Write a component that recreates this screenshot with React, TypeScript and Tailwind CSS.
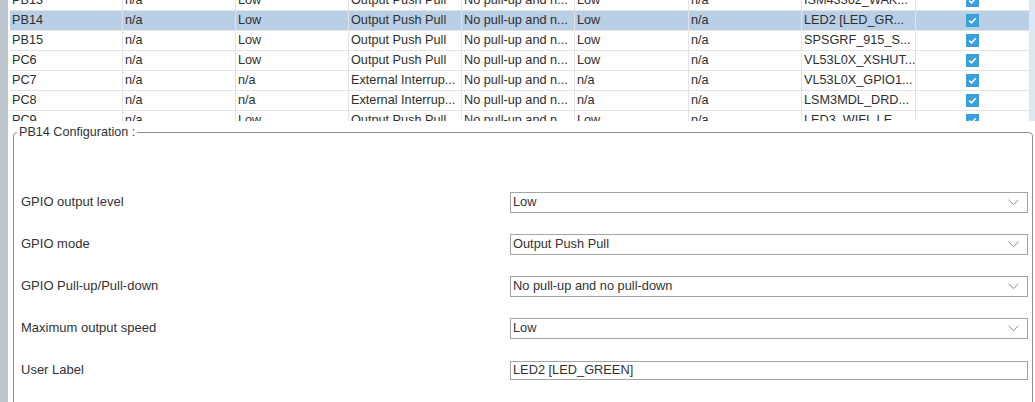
import React from "react";

type Row = { pin: string; c: string[]; sel?: boolean };

const rows: Row[] = [
  { pin: "PB13", c: ["n/a", "Low", "Output Push Pull", "No pull-up and n...", "Low", "n/a", "ISM43362_WAK..."] },
  { pin: "PB14", c: ["n/a", "Low", "Output Push Pull", "No pull-up and n...", "Low", "n/a", "LED2 [LED_GR..."], sel: true },
  { pin: "PB15", c: ["n/a", "Low", "Output Push Pull", "No pull-up and n...", "Low", "n/a", "SPSGRF_915_S..."] },
  { pin: "PC6", c: ["n/a", "Low", "Output Push Pull", "No pull-up and n...", "Low", "n/a", "VL53L0X_XSHUT..."] },
  { pin: "PC7", c: ["n/a", "n/a", "External Interrup...", "No pull-up and n...", "n/a", "n/a", "VL53L0X_GPIO1..."] },
  { pin: "PC8", c: ["n/a", "n/a", "External Interrup...", "No pull-up and n...", "n/a", "n/a", "LSM3MDL_DRD..."] },
  { pin: "PC9", c: ["n/a", "Low", "Output Push Pull", "No pull-up and n...", "Low", "n/a", "LED3_WIFI_LE..."] },
];

function Check() {
  return (
    <div className="w-[13px] h-[13px] bg-[#3a9fdb] flex items-center justify-center">
      <svg width="11" height="11" viewBox="0 0 11 11">
        <path d="M2.2 5.6 L4.5 7.8 L8.8 3.2" stroke="white" strokeWidth="1.6" fill="none" />
      </svg>
    </div>
  );
}

function Chevron() {
  return (
    <svg width="11" height="7" viewBox="0 0 11 7" className="shrink-0">
      <path d="M0.5 0.8 L5.5 5.6 L10.5 0.8" stroke="#8a8a8a" strokeWidth="1" fill="none" />
    </svg>
  );
}

function Select({ value }: { value: string }) {
  return (
    <div className="h-[21px] border border-[#a4a4a4] bg-white flex items-center pl-[2px] pr-[8px] text-[12.8px] text-[#333]">
      <span className="flex-1 whitespace-nowrap">{value}</span>
      <Chevron />
    </div>
  );
}

const fields: { label: string; value: string; input?: boolean }[] = [
  { label: "GPIO output level", value: "Low" },
  { label: "GPIO mode", value: "Output Push Pull" },
  { label: "GPIO Pull-up/Pull-down", value: "No pull-up and no pull-down" },
  { label: "Maximum output speed", value: "Low" },
  { label: "User Label", value: "LED2 [LED_GREEN]", input: true },
];

export default function App() {
  return (
    <div className="w-[1035px] h-[402px] overflow-hidden bg-white flex font-['Liberation_Sans',Arial,sans-serif]">
      <div className="w-[8px] shrink-0 bg-[#bdc6ce]" />
      <div className="flex-1 flex flex-col min-w-0">
        <div className="h-[121px] shrink-0 overflow-hidden flex">
          <div className="ml-[2px] w-[1019px] shrink-0 mt-[-9px]">
            {rows.map((r) => (
              <div
                key={r.pin}
                className={`grid grid-cols-[113px_113px_113px_113px_113px_114px_113px_114px_113px] h-[20px] border-b border-[#e4e4e4] text-[12.7px] text-[#2e2e2e] ${r.sel ? "bg-[#b9cfe6]" : "bg-white"}`}
              >
                <div className="border-r border-[#e4e4e4] pl-[2px] flex items-center whitespace-nowrap overflow-hidden">{r.pin}</div>
                {r.c.map((v, i) => (
                  <div key={i} className="border-r border-[#e4e4e4] pl-[2px] flex items-center whitespace-nowrap overflow-hidden">
                    {v}
                  </div>
                ))}
                <div className="flex items-center justify-center">
                  <Check />
                </div>
              </div>
            ))}
          </div>
          <div className="w-[6px] shrink-0 bg-[#dce8f4]" />
        </div>
        <fieldset className="ml-[5px] mr-[2px] mt-[4px] h-[400px] shrink-0 border border-[#8e8e8e] rounded-[4px] pl-[7px] pr-[4px] pt-[41px]">
          <legend className="ml-[-4px] px-[2px] text-[12.6px] leading-[15px] text-[#333]">PB14 Configuration :</legend>
          {fields.map((f) => (
            <div key={f.label} className="grid grid-cols-[489px_1fr] h-[42px] items-center text-[13px] text-[#333]">
              <div className="whitespace-nowrap">{f.label}</div>
              {f.input ? (
                <div className="h-[19px] border border-[#a4a4a4] bg-white flex items-center pl-[2px] text-[12.8px] text-[#333] whitespace-nowrap">
                  {f.value}
                </div>
              ) : (
                <Select value={f.value} />
              )}
            </div>
          ))}
        </fieldset>
      </div>
    </div>
  );
}
